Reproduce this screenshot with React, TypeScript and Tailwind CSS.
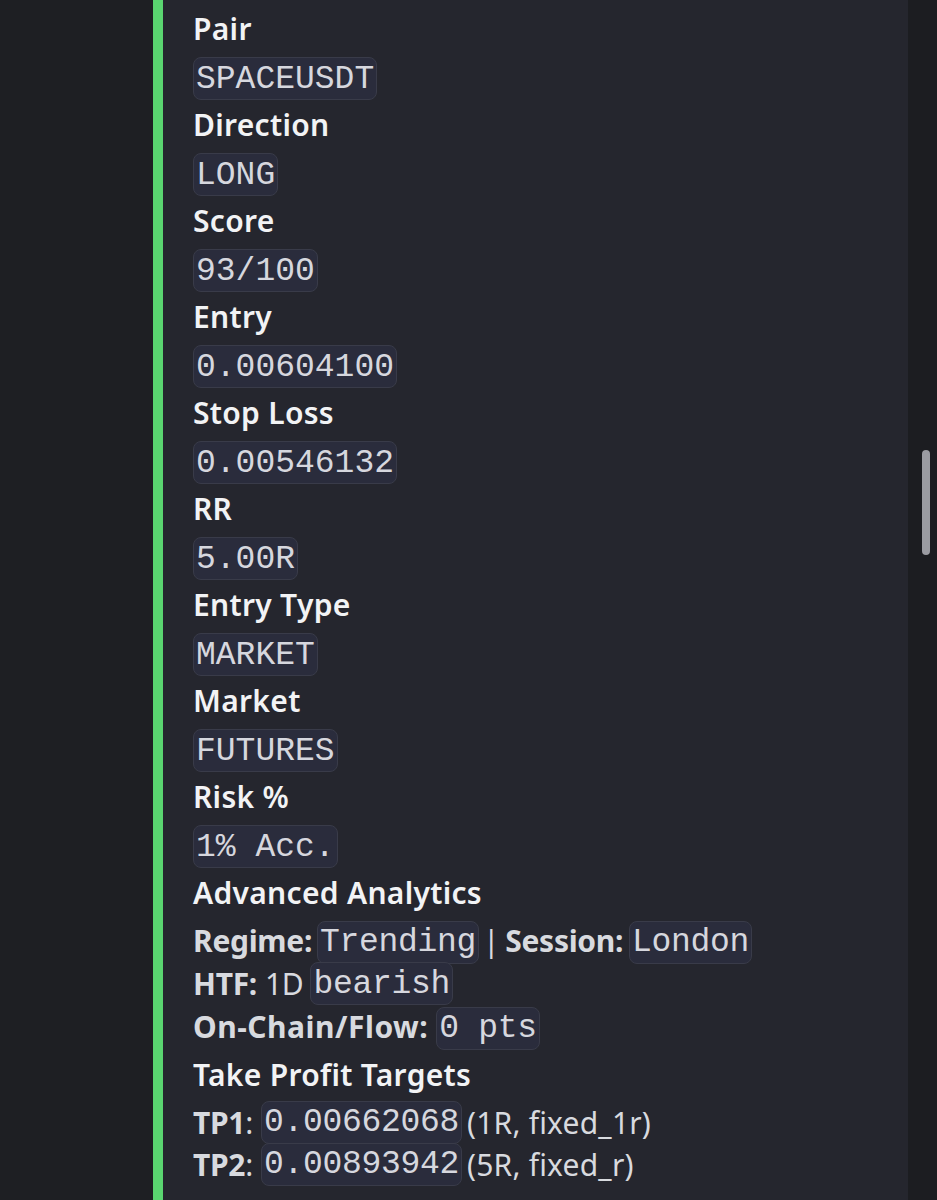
import React from "react";

const label = "h-[53px] flex items-center text-[30px] font-semibold text-[#f2f3f5] tracking-[0.3px]";
const codeCls =
  "inline-flex items-center h-[43px] px-[2px] pt-[1px] rounded-[8px] border border-[#393b49] bg-[#2a2c3c] text-[#d6d7de] text-[33px] font-['Liberation_Mono',monospace] leading-none";

function Code({ children }: { children: React.ReactNode }) {
  return <span className={codeCls}>{children}</span>;
}

const rows: [string, string][] = [
  ["Pair", "SPACEUSDT"],
  ["Direction", "LONG"],
  ["Score", "93/100"],
  ["Entry", "0.00604100"],
  ["Stop Loss", "0.00546132"],
  ["RR", "5.00R"],
  ["Entry Type", "MARKET"],
  ["Market", "FUTURES"],
  ["Risk %", "1% Acc."],
];

export default function App() {
  return (
    <div className="w-[937px] h-[1200px] flex overflow-hidden bg-[#1e1f23] font-['Noto_Sans',sans-serif]">
      <div className="w-[153px] shrink-0" />
      <div className="w-[755px] shrink-0 bg-[#25262e] border-l-[10px] border-[#5ad570] pl-[30px] pt-[2px]">
        {rows.map(([l, v]) => (
          <div key={l}>
            <div className={label}>{l}</div>
            <div className="h-[43px] flex items-start pt-[2px]">
              <Code>{v}</Code>
            </div>
          </div>
        ))}
        <div className={label}>Advanced Analytics</div>
        <div className="text-[30px] text-[#d8dadf] tracking-[-0.3px]">
          <div className="h-[43px] flex items-center">
            <span className="font-bold">Regime:</span>
            <span className="ml-[5px]">
              <Code>Trending</Code>
            </span>
            <span className="ml-[4px] mr-[6px]">|</span>
            <span className="font-bold">Session:</span>
            <span className="ml-[6px]">
              <Code>London</Code>
            </span>
          </div>
          <div className="h-[43px] flex items-center">
            <span className="font-bold">HTF:</span>
            <span className="ml-[8px] mr-[7px]">1D</span>
            <Code>bearish</Code>
          </div>
          <div className="h-[43px] flex items-center">
            <span className="font-bold tracking-[0.5px]">On-Chain/Flow:</span>
            <span className="ml-[8px]">
              <Code>0 pts</Code>
            </span>
          </div>
        </div>
        <div className={label}>Take Profit Targets</div>
        <div className="text-[30px] text-[#d8dadf] tracking-[-0.3px]">
          <div className="h-[42px] flex items-center">
            <span className="font-bold">TP1</span>
            <span className="mr-[8px]">:</span>
            <Code>0.00662068</Code>
            <span className="ml-[5px] tracking-[0.2px]">(1R, fixed_1r)</span>
          </div>
          <div className="h-[42px] flex items-center">
            <span className="font-bold">TP2</span>
            <span className="mr-[8px]">:</span>
            <Code>0.00893942</Code>
            <span className="ml-[5px] tracking-[0.2px]">(5R, fixed_r)</span>
          </div>
        </div>
      </div>
      <div className="flex-1 bg-[#1c1d21] pt-[450px] pl-[14px]">
        <div className="w-[8px] h-[105px] rounded-full bg-[#9b9ca2]" />
      </div>
    </div>
  );
}
